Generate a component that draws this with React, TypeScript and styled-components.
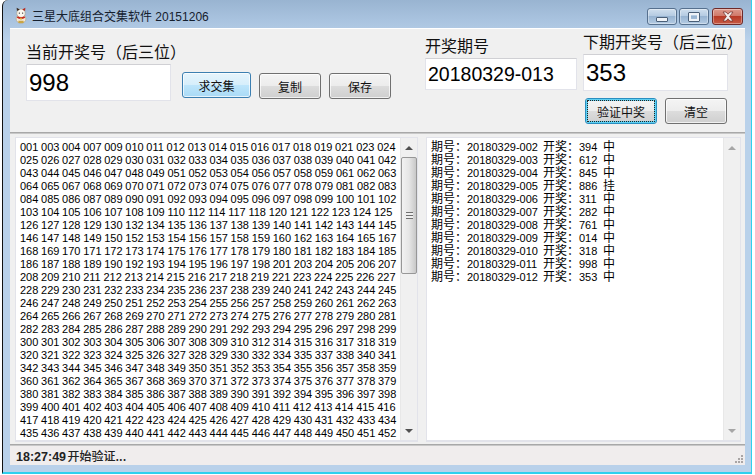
import styled, { createGlobalStyle } from "styled-components";

const GlobalStyle = createGlobalStyle`
  html, body {
    margin: 0;
    padding: 0;
    background: #fff;
    overflow: hidden;
  }
  * {
    box-sizing: border-box;
  }
`;

const CJK = `"Noto Sans CJK SC", sans-serif`;
const UI = `"Liberation Sans", "Noto Sans CJK SC", sans-serif`;

const Window = styled.div`
  margin-left: 2px;
  width: 750px;
  height: 474px;
  display: flex;
  flex-direction: column;
  padding: 0 6px 7px 7px;
  border-left: 1px solid #111;
  border-right: 1px solid #2fd0ee;
  border-bottom: 2px solid #2fd0ee;
  border-top-left-radius: 6px;
  background: linear-gradient(#99b4d1 0, #a9c3df 20px, #b9d1ea 40px);
  font-family: ${UI};
`;

const TitleBar = styled.div`
  height: 28px;
  flex: none;
  display: flex;
  align-items: flex-start;
`;

const TitleIcon = styled.svg`
  width: 12px;
  height: 17px;
  margin: 7px 5px 0 5px;
  flex: none;
`;

const TitleText = styled.span`
  margin-top: 10px;
  font-size: 12px;
  line-height: 15px;
  color: #15202e;
  flex: 1;
`;

const WinButtons = styled.div`
  display: flex;
  gap: 2px;
  margin: 8px 2px 0 0;
`;

const WinButton = styled.div<{ $close?: boolean }>`
  width: ${(p) => (p.$close ? 31 : 30)}px;
  height: 17px;
  margin-left: ${(p) => (p.$close ? 1 : 0)}px;
  display: flex;
  align-items: center;
  justify-content: center;
  border: 1px solid ${(p) => (p.$close ? "#6e2a2a" : "#56708e")};
  border-radius: 3px;
  box-shadow: inset 0 0 0 1px rgba(255, 255, 255, 0.35);
  background: ${(p) =>
    p.$close
      ? "linear-gradient(#dd9a8d 0, #d0796a 45%, #b83a26 50%, #c65a45 100%)"
      : "linear-gradient(#d0dfee 0, #b5cbe2 45%, #98b4d2 50%, #b4cbe3 100%)"};
`;

const MinGlyph = styled.div`
  width: 12px;
  height: 5px;
  margin-top: 5px;
  background: #eef2f7;
  border: 1px solid #4a5f78;
  border-radius: 1px;
`;

const MaxGlyph = styled.div`
  width: 12px;
  height: 10px;
  background: transparent;
  border: 3px solid #eef2f7;
  outline: 1px solid #4a5f78;
  outline-offset: -1px;
  border-radius: 1px;
`;

const Client = styled.div`
  flex: 1;
  min-height: 0;
  display: flex;
  flex-direction: column;
  background: #f0f0f0;
  border-top: 1px solid #fff;
`;

const TopPanel = styled.div`
  height: 103px;
  flex: none;
  display: flex;
  align-items: flex-start;
  padding-left: 16px;
`;

const LeftGroup = styled.div`
  width: 399px;
  flex: none;
  padding-top: 12px;
`;

const ActionRow = styled.div`
  display: flex;
  align-items: flex-start;
`;

const MiddleGroup = styled.div`
  width: 158px;
  flex: none;
  padding-top: 6px;
`;

const RightGroup = styled.div`
  width: 146px;
  flex: none;
  padding-top: 2px;
`;

const FieldLabel = styled.div<{ $gap: number }>`
  font-family: ${CJK};
  font-size: 16px;
  line-height: 21px;
  margin-bottom: ${(p) => p.$gap}px;
  color: #111;
  white-space: nowrap;
`;

const Field = styled.div<{ $w: number; $h: number; $size: number }>`
  width: ${(p) => p.$w}px;
  height: ${(p) => p.$h}px;
  background: #fff;
  border: 1px solid #e2e3ea;
  border-top-color: #d0d0d4;
  padding: 3px 2px 0;
  font-size: ${(p) => p.$size}px;
  line-height: ${(p) => p.$h - 8}px;
  color: #000;
  font-family: "Liberation Sans", sans-serif;
`;

const Button = styled.div<{ $w: number; $ml?: number; $mt?: number; $kind?: string }>`
  width: ${(p) => p.$w}px;
  height: 26px;
  margin-left: ${(p) => p.$ml ?? 0}px;
  margin-top: ${(p) => p.$mt ?? 0}px;
  display: flex;
  align-items: center;
  justify-content: center;
  font-family: ${CJK};
  font-size: 12px;
  color: #111;
  border-radius: 3px;
  border: 1px solid ${(p) => (p.$kind === "primary" ? "#3c7fb1" : p.$kind === "focus" ? "#2a8fc0" : "#707070")};
  box-shadow: inset 0 0 0 1px rgba(255, 255, 255, 0.7);
  background: ${(p) =>
    p.$kind === "primary"
      ? "linear-gradient(#e6f4fc 0, #d6eefb 50%, #bde5fb 52%, #a9daf6 100%)"
      : "linear-gradient(#f4f4f4 0, #ececec 50%, #dcdcdc 52%, #cfcfcf 100%)"};
  ${(p) =>
    p.$kind === "focus" &&
    `outline: 1px dotted #222; outline-offset: -3px; box-shadow: inset 0 0 0 2px #5fd0f2;`}
`;

const PairRow = styled.div`
  display: flex;
  margin-top: 7px;
  padding-left: 2px;
`;

const Divider = styled.div`
  height: 2px;
  flex: none;
  background: #a8a8a8;
  border-bottom: 1px solid #c8c8c8;
`;

const BottomPanel = styled.div`
  flex: 1;
  min-height: 0;
  display: flex;
  padding: 3px 4px 2px 5px;
  gap: 8px;
`;

const ListBox = styled.div<{ $w: number }>`
  width: ${(p) => p.$w}px;
  flex: none;
  display: flex;
  background: #fff;
  border: 1px solid #e2e3ea;
  border-bottom-width: 2px;
  overflow: hidden;
`;

const ListText = styled.div`
  flex: 1;
  min-width: 0;
  padding: 3px 0 0 4px;
  overflow: hidden;
  font-size: 11px;
  line-height: 13px;
  color: #000;
  white-space: pre;
`;

const NumberLine = styled.div`
  font-family: "Liberation Sans", sans-serif;
  word-spacing: -0.35px;
`;

const DrawLine = styled.div`
  height: 13px;
  display: flex;
  font-family: ${UI};
  font-size: 12px;
  line-height: 13px;
`;

const DrawPart = styled.span<{ $w: number }>`
  width: ${(p) => p.$w}px;
  flex: none;
`;

const DrawDigits = styled(DrawPart)`
  font-family: "Liberation Sans", sans-serif;
  font-size: 11px;
`;

const ScrollTrack = styled.div`
  width: 17px;
  flex: none;
  display: flex;
  flex-direction: column;
  background: #f0f0f0;
  border-left: 1px solid #e8e8e8;
`;

const ScrollEnd = styled.div`
  height: 19px;
  flex: none;
  display: flex;
  align-items: center;
  justify-content: center;
`;

const Arrow = styled.div<{ $down?: boolean; $muted?: boolean }>`
  width: 0;
  height: 0;
  border-left: 4px solid transparent;
  border-right: 4px solid transparent;
  ${(p) => (p.$down ? "border-top" : "border-bottom")}: 4px solid ${(p) => (p.$muted ? "#a6a6a6" : "#505050")};
`;

const ScrollMiddle = styled.div`
  flex: 1;
  min-height: 0;
`;

const Thumb = styled.div`
  height: 117px;
  display: flex;
  align-items: center;
  justify-content: center;
  border: 1px solid #979797;
  border-radius: 2px;
  background: linear-gradient(90deg, #f2f2f2, #e6e6e6 50%, #c8c8c8);
`;

const Gripper = styled.div`
  width: 7px;
  height: 7px;
  background: repeating-linear-gradient(#6f6f6f 0, #6f6f6f 1px, #eee 1px, #eee 3px);
`;

const StatusBar = styled.div`
  height: 19px;
  flex: none;
  display: flex;
  align-items: center;
  justify-content: space-between;
  padding-left: 6px;
  background: #f0eded;
  font-size: 12.5px;
  font-weight: 700;
  word-spacing: -2px;
  color: #222;
`;

const StatusTail = styled.span`
  font-family: ${CJK};
  font-size: 12px;
  font-weight: 500;
`;

const Grip = styled.svg`
  width: 9px;
  height: 9px;
  margin: 6px 2px 0 0;
`;

const NUMBERS = [
  "001 003 004 007 009 010 011 012 013 014 015 016 017 018 019 021 023 024",
  "025 026 027 028 029 030 031 032 033 034 035 036 037 038 039 040 041 042",
  "043 044 045 046 047 048 049 051 052 053 054 056 057 058 059 061 062 063",
  "064 065 067 068 069 070 071 072 073 074 075 076 077 078 079 081 082 083",
  "084 085 086 087 089 090 091 092 093 094 095 096 097 098 099 100 101 102",
  "103 104 105 106 107 108 109 110 112 114 117 118 120 121 122 123 124 125",
  "126 127 128 129 130 132 134 135 136 137 138 139 140 141 142 143 144 145",
  "146 147 148 149 150 152 153 154 156 157 158 159 160 162 163 164 165 167",
  "168 169 170 171 172 173 174 175 176 177 178 179 180 181 182 183 184 185",
  "186 187 188 189 190 192 193 194 195 196 197 198 201 203 204 205 206 207",
  "208 209 210 211 212 213 214 215 216 217 218 219 221 223 224 225 226 227",
  "228 229 230 231 232 233 234 235 236 237 238 239 240 241 242 243 244 245",
  "246 247 248 249 250 251 252 253 254 255 256 257 258 259 260 261 262 263",
  "264 265 266 267 268 269 270 271 272 273 274 275 276 277 278 279 280 281",
  "282 283 284 285 286 287 288 289 290 291 292 293 294 295 296 297 298 299",
  "300 301 302 303 304 305 306 307 308 309 310 312 314 315 316 317 318 319",
  "320 321 322 323 324 325 326 327 328 329 330 332 334 335 337 338 340 341",
  "342 343 344 345 346 347 348 349 350 351 352 353 354 355 356 357 358 359",
  "360 361 362 364 365 367 368 369 370 371 372 373 374 375 376 377 378 379",
  "380 381 382 383 384 385 386 387 388 389 390 391 392 394 395 396 397 398",
  "399 400 401 402 403 404 405 406 407 408 409 410 411 412 413 414 415 416",
  "417 418 419 420 421 422 423 424 425 426 427 428 429 430 431 432 433 434",
  "435 436 437 438 439 440 441 442 443 444 445 446 447 448 449 450 451 452",
];

const DRAWS = [
  ["002", "394", "中"],
  ["003", "612", "中"],
  ["004", "845", "中"],
  ["005", "886", "挂"],
  ["006", "311", "中"],
  ["007", "282", "中"],
  ["008", "761", "中"],
  ["009", "014", "中"],
  ["010", "318", "中"],
  ["011", "998", "中"],
  ["012", "353", "中"],
];

const Scrollbar = ({ thumb }: { thumb?: boolean }) => (
  <ScrollTrack>
    <ScrollEnd>
      <Arrow $muted={!thumb} />
    </ScrollEnd>
    <ScrollMiddle>{thumb && <Thumb><Gripper /></Thumb>}</ScrollMiddle>
    <ScrollEnd>
      <Arrow $down $muted={!thumb} />
    </ScrollEnd>
  </ScrollTrack>
);

const App = () => {
  return (
    <Window>
      <GlobalStyle />
      <TitleBar>
        <TitleIcon viewBox="0 0 16 22">
          <ellipse cx="8" cy="15.5" rx="6.5" ry="6" fill="#f3ead8" stroke="#a89a80" strokeWidth="0.8" />
          <circle cx="8" cy="8" r="5.6" fill="#fbf7ee" stroke="#a89a80" strokeWidth="0.8" />
          <path d="M2.6 5 L2.2 0.6 L6.4 3 Z" fill="#3a2b22" />
          <path d="M13.4 5 L13.8 0.6 L9.6 3 Z" fill="#b52a20" />
          <path d="M3 13 Q8 16 13 13" stroke="#c8281e" strokeWidth="2" fill="none" />
          <circle cx="8" cy="15.4" r="1.3" fill="#e2b23a" />
          <circle cx="5.8" cy="7.8" r="0.9" fill="#222" />
          <circle cx="10.2" cy="7.8" r="0.9" fill="#222" />
          <rect x="4.5" y="18" width="7" height="3" fill="#c9a544" />
        </TitleIcon>
        <TitleText>三星大底组合交集软件 20151206</TitleText>
        <WinButtons>
          <WinButton><MinGlyph /></WinButton>
          <WinButton><MaxGlyph /></WinButton>
          <WinButton $close>
            <svg width="14" height="11" viewBox="0 0 14 11">
              <path
                d="M2 1 L5 1 L7 3.2 L9 1 L12 1 L8.6 5.5 L12 10 L9 10 L7 7.8 L5 10 L2 10 L5.4 5.5 Z"
                fill="#f4efee"
                stroke="#6d2d26"
                strokeWidth="0.7"
              />
            </svg>
          </WinButton>
        </WinButtons>
      </TitleBar>
      <Client>
        <TopPanel>
          <LeftGroup>
            <FieldLabel $gap={2}>当前开奖号（后三位）</FieldLabel>
            <ActionRow>
              <Field $w={145} $h={37} $size={24}>998</Field>
              <Button $w={69} $ml={11} $mt={8} $kind="primary">求交集</Button>
              <Button $w={62} $ml={8} $mt={9}>复制</Button>
              <Button $w={62} $ml={8} $mt={9}>保存</Button>
            </ActionRow>
          </LeftGroup>
          <MiddleGroup>
            <FieldLabel $gap={2}>开奖期号</FieldLabel>
            <Field $w={152} $h={32} $size={19.5}>20180329-013</Field>
          </MiddleGroup>
          <RightGroup>
            <FieldLabel $gap={2}>下期开奖号（后三位）</FieldLabel>
            <Field $w={145} $h={37} $size={24}>353</Field>
            <PairRow>
              <Button $w={72} $kind="focus">验证中奖</Button>
              <Button $w={62} $ml={8}>清空</Button>
            </PairRow>
          </RightGroup>
        </TopPanel>
        <Divider />
        <BottomPanel>
          <ListBox $w={403}>
            <ListText>
              {NUMBERS.map((line) => (
                <NumberLine key={line}>{line}</NumberLine>
              ))}
            </ListText>
            <Scrollbar thumb />
          </ListBox>
          <ListBox $w={315}>
            <ListText>
              {DRAWS.map(([issue, result, state]) => (
                <DrawLine key={issue}>
                  <DrawPart $w={36}>期号：</DrawPart>
                  <DrawDigits $w={76}>20180329-{issue}</DrawDigits>
                  <DrawPart $w={36}>开奖：</DrawPart>
                  <DrawDigits $w={24}>{result}</DrawDigits>
                  <DrawPart $w={12}>{state}</DrawPart>
                </DrawLine>
              ))}
            </ListText>
            <Scrollbar />
          </ListBox>
        </BottomPanel>
        <Divider />
        <StatusBar>
          <span>18:27:49 <StatusTail>开始验证...</StatusTail></span>
          <Grip viewBox="0 0 9 9">
            <g fill="#a9a5a5">
              <rect x="7" y="1" width="2" height="2" />
              <rect x="4" y="4" width="2" height="2" />
              <rect x="7" y="4" width="2" height="2" />
              <rect x="1" y="7" width="2" height="2" />
              <rect x="4" y="7" width="2" height="2" />
              <rect x="7" y="7" width="2" height="2" />
            </g>
          </Grip>
        </StatusBar>
      </Client>
    </Window>
  );
};

export default App;
